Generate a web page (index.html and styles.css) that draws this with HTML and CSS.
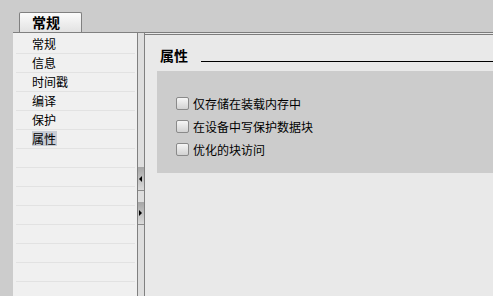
FILE: index.html
```html
<!DOCTYPE html>
<html lang="zh-CN">
<head>
    <meta charset="UTF-8">
    <title>常规</title>
    <link rel="stylesheet" href="styles.css">
</head>
<body>
<div class="tabbar">
    <div class="tab">常规</div>
</div>
<div class="main">
    <ul class="nav">
        <li>常规</li>
        <li>信息</li>
        <li>时间戳</li>
        <li>编译</li>
        <li>保护</li>
        <li><span class="current">属性</span></li>
        <li></li>
        <li></li>
        <li></li>
        <li></li>
        <li></li>
        <li></li>
        <li></li>
        <li></li>
    </ul>
    <div class="splitter">
        <div class="splitbtn"><span class="arrow-left"></span></div>
        <div class="splitbtn second"><span class="arrow-right"></span></div>
    </div>
    <div class="content">
        <div class="header">
            <span class="title">属性</span>
            <span class="rule"></span>
        </div>
        <div class="options">
            <label class="option"><span class="check"></span>仅存储在装载内存中</label>
            <label class="option"><span class="check"></span>在设备中写保护数据块</label>
            <label class="option"><span class="check"></span>优化的块访问</label>
        </div>
    </div>
</div>
</body>
</html>
```

FILE: styles.css
```css
* {
    margin: 0;
    padding: 0;
    box-sizing: border-box;
}
body {
    width: 493px;
    height: 296px;
    overflow: hidden;
    background: #cccccc;
    font-family: "Noto Sans CJK SC", "DejaVu Sans", sans-serif;
    font-size: 12px;
    color: #000000;
}
.tabbar {
    height: 32px;
    padding-left: 19px;
    display: flex;
    align-items: flex-end;
}
.tab {
    width: 63px;
    height: 20px;
    border: solid 1px #808080;
    border-bottom: none;
    border-radius: 2px 2px 0 0;
    background: linear-gradient(#fbfbfb, #e2e2e2);
    padding-left: 12px;
    font-size: 14px;
    font-weight: bold;
    line-height: 19px;
}
.main {
    height: 264px;
    margin-left: 13px;
    display: flex;
}
.nav {
    width: 124px;
    list-style: none;
    background: #f0f0f0;
    border-top: solid 1px #808080;
    padding-top: 2px;
    overflow: hidden;
}
.nav li {
    height: 19px;
    margin: 0 2px 0 3px;
    padding-left: 16px;
    border-bottom: solid 1px #e2e2e2;
    line-height: 18px;
}
.current {
    display: inline-block;
    background: #c8ccd4;
    line-height: 15px;
    padding-right: 1px;
}
.splitter {
    width: 8px;
    background: #dedede;
    border-left: solid 1px #808080;
    border-right: solid 1px #808080;
    border-top: solid 1px #808080;
    padding-top: 134px;
}
.splitbtn {
    height: 24px;
    display: flex;
    align-items: center;
    background: linear-gradient(#a6a6a6, #dadada);
    border-bottom: solid 1px #8c8c8c;
}
.splitbtn.second {
    margin-top: 11px;
    height: 23px;
}
.arrow-left {
    width: 0;
    height: 0;
    margin-left: 1px;
    border-top: solid 3px transparent;
    border-bottom: solid 3px transparent;
    border-right: solid 3px #000000;
}
.arrow-right {
    width: 0;
    height: 0;
    margin-left: 1px;
    border-top: solid 3px transparent;
    border-bottom: solid 3px transparent;
    border-left: solid 3px #000000;
}
.content {
    flex: 1;
    background: #e9e9e9;
    border-top: double 3px #7c7c7c;
    padding-left: 12px;
}
.header {
    display: flex;
    padding: 10px 0 0 3px;
    height: 30px;
}
.title {
    font-size: 14px;
    font-weight: bold;
    line-height: 20px;
}
.rule {
    flex: 1;
    height: 17px;
    margin-left: 13px;
    border-bottom: solid 1px #000000;
}
.options {
    margin-top: 6px;
    height: 102px;
    background: #cccccc;
    padding: 21px 0 0 19px;
}
.option {
    display: flex;
    align-items: center;
    height: 23px;
}
.check {
    width: 13px;
    height: 13px;
    margin-right: 4px;
    border: solid 1px #8a8a8a;
    border-radius: 2px;
    background: linear-gradient(#f6f6f6, #d2d2d2);
}
```
